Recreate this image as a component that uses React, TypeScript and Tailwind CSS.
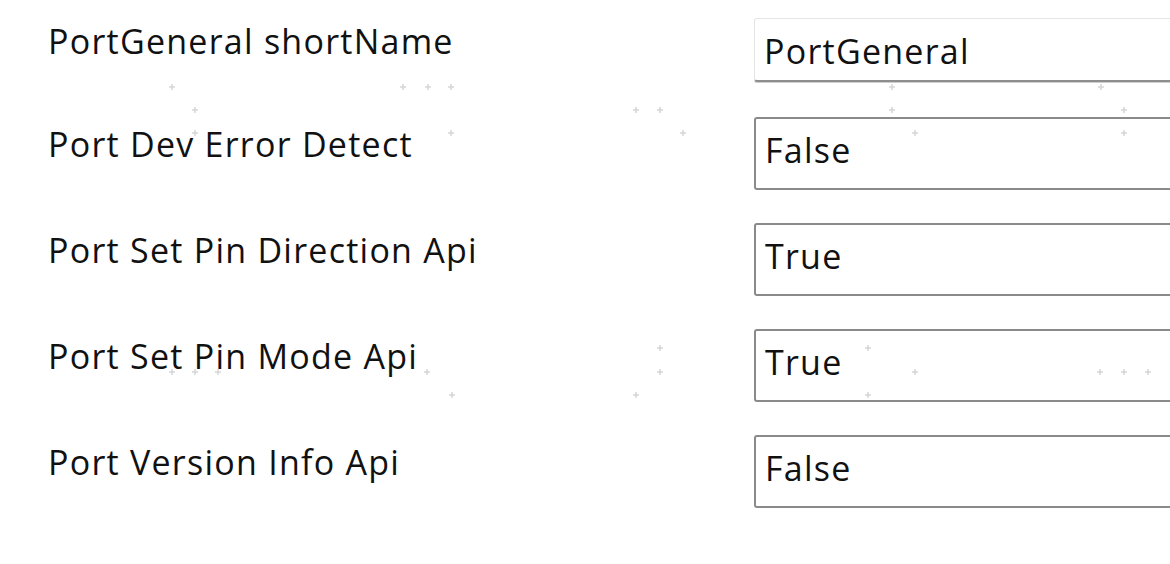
import React from "react";

interface Field {
  label: string;
  value: string;
  readOnly?: boolean;
}

const fields: Field[] = [
  { label: "PortGeneral shortName", value: "PortGeneral", readOnly: true },
  { label: "Port Dev Error Detect", value: "False" },
  { label: "Port Set Pin Direction Api", value: "True" },
  { label: "Port Set Pin Mode Api", value: "True" },
  { label: "Port Version Info Api", value: "False" },
];

// designer grid marks
const marks: [number, number][] = [
  [172, 87], [195, 110], [403, 87], [428, 87], [451, 87], [195, 133], [451, 133],
  [636, 110], [660, 110], [683, 133], [892, 87], [1101, 87], [892, 110], [1124, 110],
  [915, 133], [1124, 133], [868, 348], [915, 372], [1100, 372], [1124, 372], [1148, 372],
  [868, 395], [172, 372], [195, 372], [218, 372], [427, 372], [452, 395], [660, 348],
  [660, 372], [636, 395],
];

const App = () => {
  return (
    <div
      className="relative w-[1170px] h-[564px] overflow-hidden bg-white text-[#111] font-medium"
      style={{ fontFamily: '"Open Sans", "Noto Sans CJK SC", sans-serif' }}
    >
      <svg className="absolute inset-0 pointer-events-none" width="1170" height="564">
        {marks.map(([x, y], i) => (
          <g key={i} stroke="#d6d6d6" strokeWidth="1.5">
            <line x1={x - 3} y1={y} x2={x + 3} y2={y} />
            <line x1={x} y1={y - 3} x2={x} y2={y + 3} />
          </g>
        ))}
      </svg>

      <div className="relative flex flex-col">
        {fields.map((f, i) => (
          <div
            key={f.label}
            className={`grid grid-cols-[754px_1fr] items-center ${i === 0 ? "h-[100px]" : "h-[106px]"}`}
          >
            <div className="pl-[48px] pb-[18px] text-[34px] tracking-[1.25px] leading-none whitespace-nowrap">
              {f.label}
            </div>
            {f.readOnly ? (
              <div className="w-[480px] h-[64px] flex items-center pl-[9px] pt-[2px] border border-[#e4e4e4] border-b-2 border-b-[#8e8e8e] rounded-[3px] text-[34px] tracking-[1.25px] leading-none shadow-[0_1px_0_#cfcfcf]">
                {f.value}
              </div>
            ) : (
              <div className="w-[480px] h-[73px] flex items-center pl-[9px] pb-[6px] border-2 border-[#8a8a8a] rounded-[3px] text-[34px] tracking-[1.25px] leading-none">
                {f.value}
              </div>
            )}
          </div>
        ))}
      </div>
    </div>
  );
};

export default App;
